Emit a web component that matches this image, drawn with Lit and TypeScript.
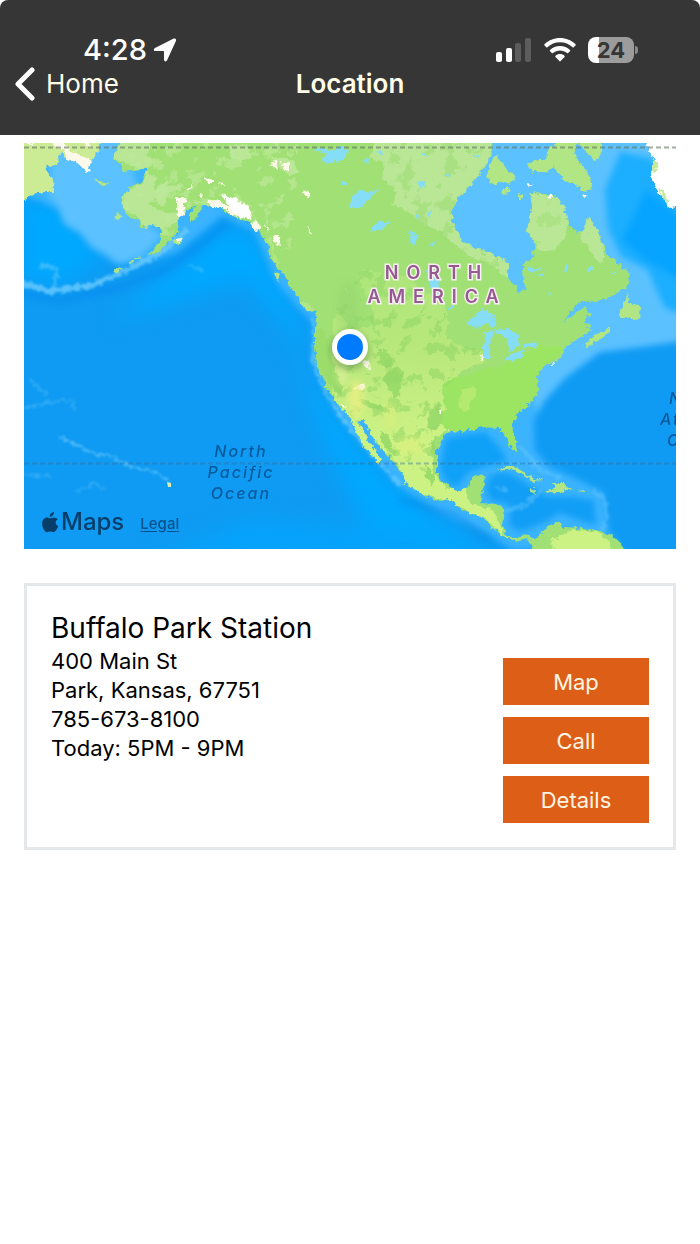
import { LitElement, html, css, svg } from "lit";
import { customElement, property } from "lit/decorators.js";

@customElement("status-bar")
class StatusBar extends LitElement {
  @property() time = "";
  @property() battery = "";

  static styles = css`
    :host { display: flex; justify-content: space-between; align-items: center; height: 32px; padding: 0 62px 0 83px; color: #fff; }
    .side { display: flex; align-items: center; }
    .time { font-size: 29px; line-height: 32px; font-weight: 500; margin-right: 6px; }
    .signal { margin-right: 13px; }
    .wifi { margin-right: 12px; }
    .battery { display: flex; align-items: center; gap: 1px; }
    .level { width: 46px; height: 26px; border-radius: 8px; background: linear-gradient(90deg, #fff 11px, #9c9c9c 11px); color: #363636; font-size: 22px; line-height: 26px; font-weight: 700; text-align: center; }
    .tip { width: 3px; height: 8px; border-radius: 0 3px 3px 0; background: #8a8a8a; }
    svg { display: block; }
  `;

  render() {
    return html`
      <div class="side">
        <span class="time">${this.time}</span>
        <svg width="24" height="24" viewBox="0 0 24 24" aria-hidden="true">
          <path d="M20.200.8 2 10C.2 11 .6 13 2.600 13H10c.7 0 1 .4 1 1v7.600c0 2.200 2.300 2.500 3.200.5L22.900 3C23.700 1.200 22.100 0 20.200.8z" fill="#fff" />
        </svg>
      </div>
      <div class="side">
        <svg class="signal" width="35" height="24" viewBox="0 0 35 24" aria-hidden="true">
          <rect x="0" y="14" width="6" height="10" rx="2" fill="#fff" />
          <rect x="10" y="10" width="6" height="14" rx="2" fill="#fff" />
          <rect x="19" y="5" width="6" height="19" rx="2" fill="#5c5c5c" />
          <rect x="29" y="0" width="6" height="24" rx="2" fill="#5c5c5c" />
        </svg>
        <svg class="wifi" width="32" height="24" viewBox="0 0 32 24" aria-hidden="true">
          <path d="M16 0C22.100 0 27.600 2.400 31.500 6.200q.6.600 0 1.200l-1.800 1.900q-.5.500-1.100 0C25.300 6.200 20.900 4.300 16 4.300S6.700 6.200 3.400 9.300q-.6.500-1.100 0L.5 7.400q-.6-.6 0-1.200C4.400 2.400 9.900 0 16 0z" fill="#fff" />
          <path d="M16 8.100c3.900 0 7.400 1.500 10 3.900q.6.600 0 1.200l-1.900 1.900q-.5.500-1.100 0C21.100 13.400 18.700 12.400 16 12.400s-5.100 1-7 2.700q-.6.500-1.100 0L6 13.200q-.6-.6 0-1.200c2.600-2.400 6.100-3.900 10-3.900z" fill="#fff" />
          <path d="M16 16c1.700 0 3.300.6 4.500 1.700q.6.600 0 1.200l-3.900 4.200q-.6.600-1.200 0l-3.900-4.200q-.6-.6 0-1.200C12.700 16.600 14.300 16 16 16z" fill="#fff" />
        </svg>
        <div class="battery"><span class="level">${this.battery}</span><span class="tip"></span></div>
      </div>
    `;
  }
}

const WEST_SHELF = "M143 160 125 143 24 143V196L40 201 58 210 64 225 80 234 90 248 106 257 116 265 145 262 178 252 205 230 222 216 255 232 275 280 300 310 313 322 312 362 335 410 360 442 400 487 440 512 490 535 512 550 700 550 700 500 560 400Z";

const MAINLAND = `M120 133 120 143 113 158 122 165 122 171 142 169 147 168 145 175 140 183 130 187 127 192 122 198 123 208 130 217
  140 220 141 228 150 226 160 228 162 237 155 247 147 255 159 252 168 243 179 230 177 218 185 212 197 205 190 214 190 222
  197 216 203 205 217 206 233 216 250 222 261 234 267 244 270 256 276 268 284 274 289 285 297 296 307 303 317 313 315 327
  315 345 317 365 328 392 340 407 350 418 357 433 365 448 380 465 382 460 370 443 358 420 363 419 375 440 387 455 400 470
  405 483 420 493 440 502 450 500 463 510 483 517 492 528 502 535 517 542 527 538 532 545 530 558H628L622 546 610 535
  597 530 583 528 563 527 558 521 547 527 537 538 523 535 515 538 505 533 502 525 504 508 497 504 480 503 482 492 486 476
  475 475 468 487 457 492 443 483 437 472 437 448 445 433 467 430 483 427 500 428 507 438 513 452 517 452 513 425 517 415
  533 400 540 388 535 378 543 367 562 358 565 348 580 338 591 330 585 323 590 313 583 308 563 323 577 303 603 300 627 288
  630 273 620 265 607 253 597 230 588 217 585 230 577 233 568 223 565 207 553 195 530 193 532 207 527 230 535 242 533 257
  522 265 526 287 520 292 508 278 508 262 483 250 463 242 457 230 452 223 452 210 462 193 475 180 485 167 492 153 493 133Z`;

const ISLANDS = [
  "M495 155 506 168 517 180 508 183 501 181 493 185 487 178 489 165Z",
  "M528 164 535 160 546 160 547 150 557 143 557 133H580L575 155 583 166 590 178 592 188 585 192 575 184 563 179 553 167 546 172 532 172Z",
  "M579 133H602L602 152 596 162 590 156 579 143Z",
  "M500 193 507 187 510 189 504 195ZM518 194 521 193 521 201 518 200Z",
  "M617 315 625 302 627 293 630 303 638 305 642 315 635 321 628 318 620 318Z",
  "M584 345 594 335 605 331 610 328 610 333 598 340 588 347Z",
  "M298 297 307 303 316 311 312 313 303 306Z",
  "M268 235 273 240 275 252 270 248ZM273 252 279 262 278 267 273 260ZM274 270 280 274 279 281 275 277Z",
  "M93 180 102 180 107 184 105 187 98 184ZM115 215 119 214 123 217 117 219Z",
  "M174 240 182 237 181 243 175 245ZM128 262 137 258 141 256 137 260 129 264ZM114 271 121 267 122 270 116 274Z",
  "M497 470 505 466 514 466 525 473 533 478 543 481 533 482 525 476 515 471 505 469Z",
  "M545 490 554 489 553 483 562 483 572 489 562 491 558 493 545 491ZM528 490 535 489 534 493ZM579 491 585 490 585 492Z",
];

const SNOW = [
  "M207 202 214 199 221 202 229 207 233 203 224 197 221 194 230 197 239 201 248 206 252 215 250 220 241 217 232 214 225 209 213 209Z",
  "M175 197 186 197 187 202 183 205 184 214 178 218 177 204ZM186 190 194 184 193 188 187 192Z",
  "M204 178 213 181 213 184 205 181ZM217 182 225 183 225 186ZM200 193 203 194 201 200Z",
  "M251 222 258 221 262 229 255 231ZM264 223 270 228 269 233ZM274 236 279 236 282 246 276 244Z",
  "M52 143 62 143 70 150 86 158 91 160 88 173 76 163 66 158 65 151ZM26 143H34L32 147ZM82 133H92L88 148Z",
  "M271 161 276 160 278 170 272 167ZM282 163 289 162 289 171 284 172ZM297 198 308 190 310 197 303 194Z",
  "M350 388 360 386 365 383 363 389 354 391ZM361 362 369 359 371 370 364 368ZM552 364 557 362 552 367ZM480 355 486 356 482 361Z",
  "M526 183 532 184 528 186ZM549 195 553 195 550 198ZM582 195 588 197 584 199ZM176 239 183 238 181 242 178 242Z",
  "M439 410 443 411 440 415ZM446 429 449 430 447 432ZM340 404 347 406 343 408ZM346 286 348 292 346 290ZM308 228 311 231 310 236Z",
];

const PALE = [
  "M378 133H493L490 158 476 180 462 193 451 212 455 228 463 242 485 250 508 262 510 278 500 272 488 262 470 258 458 247 440 231 425 225 410 214 393 204 398 192 382 178 384 163 369 158Z",
  "M530 193 553 195 565 207 568 223 564 238 555 250 540 252 533 240 527 230 532 207Z",
  "M588 217 597 230 605 250 602 265 589 250 580 238Z",
  "M110 133H153L148 155 155 162 146 170 113 158ZM145 172 158 178 152 187 160 194 149 204 166 213 179 213 178 222 164 228 141 226 140 219 123 208 127 192 145 181Z",
  "M158 188 166 180 170 186 184 184 180 190 168 193 163 207 155 202ZM229 144 246 148 252 157 240 161 231 157ZM270 156 293 160 300 172 290 175 280 169Z",
];

const ARID = [
  "M333 321 337 311 344 320 352 330 366 328 376 322 370 302 361 285 361 268 380 273 406 276 427 293 445 305 449 320 446 336 456 345 480 352 485 362 462 371 451 381 441 392 446 408 438 420 446 430 433 440 433 472 447 489 466 488 469 502 495 512 504 535 520 541 502 535 486 519 449 502 420 493 404 482 400 467 378 445 358 420 350 418 335 400 330 380 330 360 333 350Z",
  "M348 417 358 420 382 460 380 465 364 448Z",
  "M561 536 573 530 598 531 608 541 614 558 559 558 550 540Z",
];

const FOREST = [
  "M316 330 321 326 329 341 331 358 337 374 343 386 342 397 332 388 321 371 315 360Z",
  "M378 350 387 350 392 361 388 370 378 362ZM385 375 397 367 403 372 400 395 394 397 386 385Z",
  "M359 398 371 403 389 409 391 413 377 410 362 404ZM379 431 388 434 391 447 397 452 393 455 384 446Z",
  "M431 408 441 404 443 418 436 431 427 428ZM431 440 437 445 436 457 431 452ZM426 465 434 474 433 488 426 477Z",
];

const EAST = "M441 385 457 377 470 376 481 369 500 367 521 354 546 345 560 346 565 348 545 366 536 380 540 390 530 403 517 414 513 427 517 453 512 450 500 428 483 427 463 431 446 430 438 419 446 408Z";

const LAKES = [
  "M464 325 477 315 481 309 493 312 498 327 487 325 475 327Z",
  "M484 332 495 331 492 335 489 345 490 358 484 358 483 347 486 338Z",
  "M494 330 509 329 519 336 518 347 510 352 507 339 500 335Z",
  "M504 358 514 353 525 350 523 355 513 361ZM522 345 537 341 535 348 524 348Z",
  "M426 268 433 271 438 277 442 296 433 292 428 280ZM447 309 455 303 452 309Z",
  "M312 150 324 147 330 151 341 146 349 151 342 160 328 164 322 160 327 153ZM341 181 347 182 344 186Z",
  "M350 201 358 190 369 192 380 188 371 199 360 207 350 207Z",
  "M369 231 380 221 391 222 382 229ZM409 231 419 235 413 248 411 240ZM430 247 436 240 433 247Z",
  "M417 182 424 181 422 188ZM415 211 419 217 416 218ZM427 215 431 209 429 219ZM446 173 453 174 448 176Z",
  "M525 266 541 270 533 273ZM539 275 546 271 543 277ZM564 263 570 265 566 273ZM586 270 593 266 590 273ZM547 294 552 290 549 296ZM610 273 617 271 613 275Z",
  "M365 158 370 159 367 165ZM377 150 384 155 378 153ZM422 152 427 155 424 157ZM474 152 480 158 476 157Z",
];

@customElement("terrain-map")
class TerrainMap extends LitElement {
  static styles = css`
    :host { display: block; position: relative; overflow: hidden; aspect-ratio: 652 / 406; }
    .terrain { display: block; width: 100%; height: 100%; }
    .continent { font: 600 18px/24px Inter, sans-serif; letter-spacing: 8px; fill: #955a91; stroke: #f7eff0; stroke-width: 3px; paint-order: stroke; }
    .ocean { font: italic 500 16px/21px Inter, sans-serif; letter-spacing: 2px; fill: #075b9c; }
    .credits { position: absolute; left: 18px; bottom: 11px; display: flex; align-items: center; gap: 16px; color: #063e69; }
    .brand { display: flex; align-items: center; gap: 2px; font-size: 24px; line-height: 32px; font-weight: 500; }
    .legal { font-size: 15px; line-height: 20px; font-weight: 500; color: #07518b; text-underline-offset: 2px; padding-top: 3px; }
  `;

  render() {
    const shapes = (list: string[], fill: string) => svg`<path d=${list.join(" ")} fill=${fill} />`;
    return html`
      <svg class="terrain" viewBox="24 143 652 406" preserveAspectRatio="xMidYMid slice" role="img" aria-label="Map of North America">
        <defs>
          <filter id="coast" x="-5%" y="-5%" width="110%" height="110%" color-interpolation-filters="sRGB">
            <feTurbulence type="fractalNoise" baseFrequency="0.18" numOctaves="3" seed="4" result="noise" />
            <feDisplacementMap in="SourceGraphic" in2="noise" scale="7" xChannelSelector="R" yChannelSelector="G" />
          </filter>
          <filter id="patches" x="0" y="0" width="100%" height="100%" color-interpolation-filters="sRGB">
            <feTurbulence type="fractalNoise" baseFrequency="0.07" numOctaves="4" seed="11" />
            <feColorMatrix values="0 0 0 0 0  0 0 0 0 0  0 0 0 0 0  14 0 0 0 -8" result="spots" />
            <feComposite in="SourceGraphic" in2="spots" operator="in" />
          </filter>
          <filter id="soft" x="-10%" y="-10%" width="120%" height="120%" color-interpolation-filters="sRGB"><feGaussianBlur stdDeviation="3" /></filter>
          <filter id="wide" x="-30%" y="-30%" width="160%" height="160%" color-interpolation-filters="sRGB"><feGaussianBlur stdDeviation="11" /></filter>
          <filter id="ripple" x="-10%" y="-40%" width="120%" height="180%" color-interpolation-filters="sRGB">
            <feTurbulence type="fractalNoise" baseFrequency="0.2" numOctaves="2" seed="8" result="noise" />
            <feDisplacementMap in="SourceGraphic" in2="noise" scale="9" xChannelSelector="R" yChannelSelector="G" />
            <feGaussianBlur stdDeviation="0.8" />
          </filter>
          <linearGradient id="plains" gradientUnits="userSpaceOnUse" x1="0" y1="268" x2="0" y2="440">
            <stop offset="0" stop-color="#ade67c" />
            <stop offset=".5" stop-color="#b9e87c" />
            <stop offset="1" stop-color="#cdf284" />
          </linearGradient>
          <clipPath id="ground"><path d=${MAINLAND} /></clipPath>
        </defs>

        <rect x="24" y="143" width="652" height="406" fill="#0f9bf3" />
        <g filter="url(#wide)">
          <path d="M20 195 65 205 105 258 60 285 20 280ZM180 265 225 224 260 240 300 320 305 370 360 450 430 515 500 560 380 560 320 430 290 330 245 280 180 300 110 320Z" fill="#00a9ff" />
          <path d="M150 560 250 520 400 530 480 560Z" fill="#05a3fb" />
          <path d="M430 440 510 430 540 480 600 480 610 520 500 520 430 500Z" fill="#12a0f5" />
        </g>
        <g filter="url(#soft)">
          <path d=${WEST_SHELF} fill="#3bb3ff" />
          <path d="M54 133H122L148 225 162 236 140 256 120 264 104 252 92 246 80 232 65 224 58 206 48 195Z" fill="#5cc1ff" />
          <path d="M430 133H700V420H540L500 300 430 230Z" fill="#5cc1ff" />
          <path d="M620 152 650 158 690 208V318L664 307 648 270 621 256 608 228 605 190Z" fill="#1caeff" />
          <path d="M646 190 690 225V285L645 260 622 240Z" fill="#06a4ff" />
          <path d="M690 340 640 347 600 352 565 378 545 400 534 420 535 450 548 466 575 478 603 492 608 530 630 560H690Z" fill="#0f9bf4" />
          <path d="M446 438 485 432 500 448 508 462 487 466 468 473 456 488 446 481 440 468Z" fill="#0fa0f8" />
          <path d="M490 475 505 472 522 480 545 496 575 497 594 500 596 525 585 522 560 513 545 522 520 532 509 525 511 505 490 500 486 490Z" fill="#119ef6" />
        </g>
        <g fill="none" filter="url(#soft)">
          <path d="M20 293 60 300 120 287 165 270 205 242 228 223" stroke="#058bec" stroke-width="7" opacity=".6" />
          <path d="M400 500 455 515 490 540" stroke="#0787e2" stroke-width="4" opacity=".6" />
        </g>
        <g fill="none" stroke="#6bcafd" filter="url(#ripple)" stroke-linecap="round">
          <path d="M24 284 50 291 90 286 120 273 158 254 185 232" stroke-width="6" opacity=".8" />
          <path d="M40 267C55 260 60 275 53 287" stroke-width="4" opacity=".5" />
          <path d="M59 436 73 443 89 452 112 457 124 464 145 470 160 474 170 484" stroke-width="2" opacity=".7" />
          <path d="M25 408 50 402 70 400 76 410M30 380 46 395M76 492 95 482 103 489M25 475 52 476M188 265 202 270" stroke-width="2" opacity=".4" />
          <path d="M520 447 530 458 540 470 560 478M594 490 605 500 607 518 602 530M505 512 525 505 540 492M496 488 505 490" stroke-width="4" opacity=".45" />
          <path d="M313 320 313 362 327 396 355 435 400 485" stroke-width="3" opacity=".7" />
        </g>
        <path d="M167 482 171 483 171 487 168 487Z" fill="#dcebb0" />

        <g filter="url(#coast)">
          <path d=${MAINLAND} fill="#a0e074" />
          ${shapes(ISLANDS, "#b2e584")}
          <path d="M14 133H104L96 157 90 162 82 160 68 158 60 153 58 164 45 168 53 181 54 192 38 192 24 201H14Z" fill="#cbeb95" />
          <g clip-path="url(#ground)">
            ${shapes(PALE, "#b9e796")}
            ${shapes(ARID, "url(#plains)")}
            <path d=${EAST} fill="#9be562" />
            ${shapes(FOREST, "#9cdc6b")}
            <path d="M462 391 470 386 477 391 471 402 466 413 459 407Z" fill="#b4ea70" />
            <path d="M333 321 361 268 406 276 445 305 449 336 480 352 441 392 438 420 433 472 400 467 350 418 330 380Z" fill="#93d868" opacity=".6" filter="url(#patches)" />
            <path d="M120 133H300L290 250 180 240 120 220Z" fill="#bde89a" opacity=".7" filter="url(#patches)" />
            <path d="M378 133H493L460 193 455 228 508 262 488 270 393 204Z" fill="#9fdd76" opacity=".6" filter="url(#patches)" />
            <path d="M530 193H605V265H530Z" fill="#a0e074" opacity=".5" filter="url(#patches)" />
          </g>
          ${shapes(SNOW, "#fdf9ea")}
          <path d="M221 195 232 198 246 206 251 215 248 219 235 214ZM642 133H690V212L668 206 658 193 653 180 651 170 656 160 649 150Z" fill="#fff" />
          <path d="M652 160 657 161 656 174 652 170ZM658 188 664 192 668 203 663 200Z" fill="#c5e99a" />
          ${shapes(LAKES, "#86ddf8")}
        </g>
        <g filter="url(#soft)">
          <ellipse cx="356" cy="399" rx="8" ry="19" fill="#eef084" opacity=".7" />
          <ellipse cx="410" cy="446" rx="14" ry="10" fill="#e2f07c" opacity=".5" />
          <ellipse cx="390" cy="415" rx="6" ry="14" fill="#e2f07c" opacity=".5" />
          <ellipse cx="342" cy="372" rx="5" ry="14" fill="#eaf1a7" opacity=".5" />
          <ellipse cx="348" cy="308" rx="10" ry="26" fill="#92d270" opacity=".35" />
        </g>

        <path d="M24 147.500H676" stroke="#627564" stroke-opacity=".6" stroke-width="2" stroke-dasharray="5 3" />
        <path d="M24 463.500H676" stroke="#356994" stroke-opacity=".4" stroke-width="2" stroke-dasharray="5 3" />

        <g class="continent" text-anchor="middle">
          <text x="437" y="279">NORTH</text>
          <text x="437" y="303">AMERICA</text>
        </g>
        <g class="ocean" text-anchor="middle">
          <text x="241" y="457">North</text>
          <text x="241" y="478">Pacific</text>
          <text x="241" y="499">Ocean</text>
        </g>
        <g class="ocean">
          <text x="669" y="404">North</text>
          <text x="660" y="425">Atlantic</text>
          <text x="667" y="446">Ocean</text>
        </g>

        <circle cx="350" cy="350" r="20" fill="#345b32" opacity=".3" filter="url(#soft)" />
        <circle cx="350" cy="347" r="18" fill="#fff" />
        <circle cx="350" cy="347" r="13" fill="#007aff" />
      </svg>
      <div class="credits">
        <span class="brand">
          <svg width="17" height="21" viewBox="0 0 17 21" aria-hidden="true">
            <path d="M11.900 0c.2 1.300-.4 2.500-1.100 3.300-.8 1-2 1.600-3.100 1.500-.2-1.200.4-2.400 1.100-3.200C9.600.7 10.900.1 11.900 0zM15.700 7.200c-1.300.8-2 1.900-2 3.400 0 1.700 1 3.100 2.500 3.700-.4 1.300-1.100 2.600-2 3.800-.8 1.100-1.600 2.200-2.900 2.200-1.200 0-1.600-.7-3.100-.7s-1.900.7-3.100.7c-1.200.1-2.200-1.200-3-2.300C.5 15.800-.6 11.900.5 8.900 1.300 6.900 3 5.600 4.900 5.500c1.200 0 2.400.8 3.200.8.700 0 2.100-1 3.700-.9 1.500.1 2.900.6 3.900 1.800z" fill="currentColor" />
          </svg>
          Maps
        </span>
        <a class="legal" href="#legal">Legal</a>
      </div>
    `;
  }
}

@customElement("app-root")
class AppRoot extends LitElement {
  static styles = css`
    :host { display: block; min-height: 100vh; background: #fff; color: #000; font-family: Inter, "Liberation Sans", sans-serif; }
    .top { box-sizing: border-box; height: 135px; padding-top: 34px; background: #363636; border-radius: 8px 8px 0 0; color: #fffde9; }
    .bar { display: grid; grid-template-columns: 1fr auto 1fr; align-items: center; height: 36px; padding: 0 15px; }
    .back { display: flex; align-items: center; gap: 11px; width: max-content; color: inherit; font-size: 26px; line-height: 32px; text-decoration: none; }
    .title { margin: 0; font-size: 26px; line-height: 32px; font-weight: 600; }
    main { padding: 8px 24px 0; }
    .card { display: flex; justify-content: space-between; margin-top: 34px; padding: 24px; border: 3px solid #e5e8eb; }
    .name { margin: 0; font-size: 28px; line-height: 37px; font-weight: 400; }
    .info { font-style: normal; font-size: 22px; line-height: 29px; }
    .line { display: block; }
    .actions { display: flex; flex-direction: column; gap: 12px; width: 146px; padding-top: 48px; }
    .action { height: 47px; border: 0; padding: 0; background: #dd5e17; color: #fff5e4; font: 400 22px/32px Inter, "Liberation Sans", sans-serif; }
  `;

  render() {
    return html`
      <header class="top">
        <status-bar time="4:28" battery="24"></status-bar>
        <nav class="bar">
          <a class="back" href="#home">
            <svg width="20" height="36" viewBox="0 0 20 36" fill="none" stroke="#fff" stroke-width="5" stroke-linecap="round" stroke-linejoin="round" aria-hidden="true"><path d="M17 4 3 18l14 14" /></svg>
            Home
          </a>
          <h1 class="title">Location</h1>
        </nav>
      </header>
      <main>
        <terrain-map></terrain-map>
        <section class="card">
          <div>
            <h2 class="name">Buffalo Park Station</h2>
            <address class="info">
              <span class="line">400 Main St</span>
              <span class="line">Park, Kansas, 67751</span>
              <span class="line">785-673-8100</span>
              <span class="line">Today: 5PM - 9PM</span>
            </address>
          </div>
          <div class="actions">
            ${["Map", "Call", "Details"].map((label) => html`<button class="action" type="button">${label}</button>`)}
          </div>
        </section>
      </main>
    `;
  }
}
